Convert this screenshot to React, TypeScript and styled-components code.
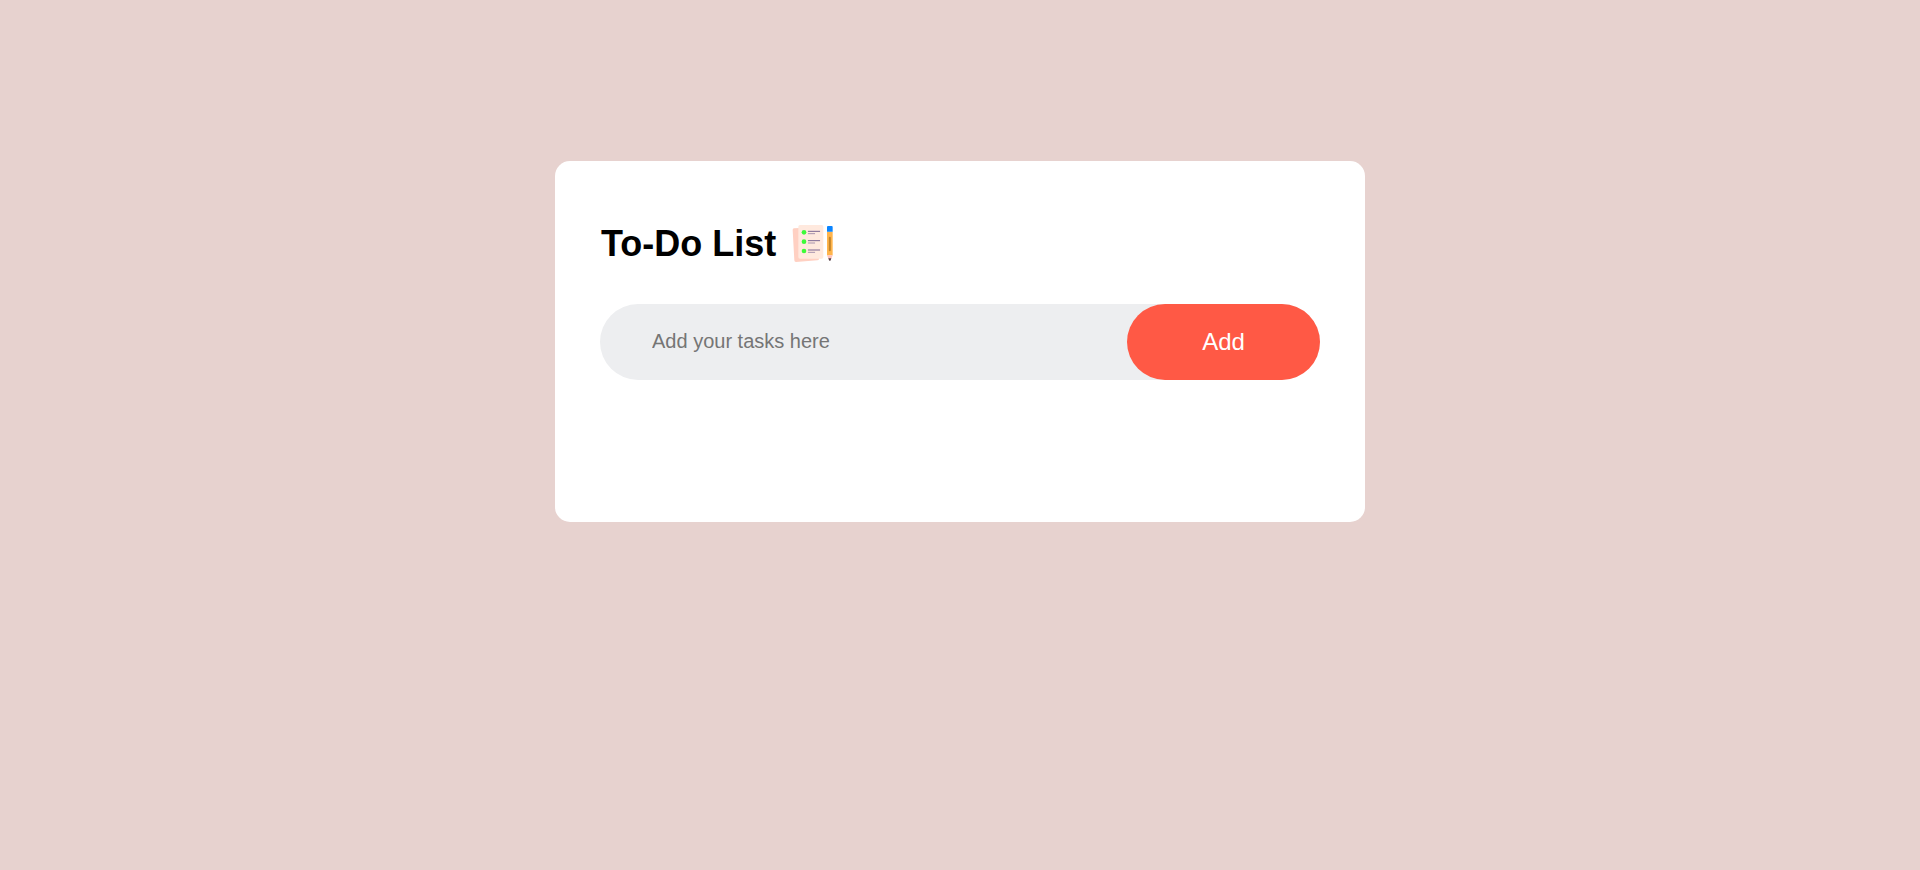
import React, { useState } from 'react';
import styled, { createGlobalStyle } from 'styled-components';

const GlobalStyle = createGlobalStyle`
  *, *::before, *::after { box-sizing: border-box; }
  body {
    margin: 0;
    background: #e7d2cf;
    font-family: "Liberation Sans", Arial, sans-serif;
  }
`;

const Page = styled.main`
  min-height: 100vh;
  padding: 161px 16px 40px;
`;

const Card = styled.section`
  max-width: 810px;
  margin: 0 auto;
  padding: 60px 45px 102px;
  border-radius: 15px;
  background: #fff;
`;

const Header = styled.header`
  display: flex;
  align-items: center;
  gap: 15px;
  margin-bottom: 38px;
  padding-left: 1px;
`;

const Title = styled.h1`
  margin: 0;
  color: #000;
  font-size: 36px;
  font-weight: 700;
  line-height: 45px;
`;

const Icon = styled.svg`
  width: 45px;
  height: 45px;
  flex: none;
`;

const Form = styled.form`
  display: flex;
  height: 76px;
  border-radius: 38px;
  background: #edeef0;
  margin-bottom: 40px;
`;

const TaskInput = styled.input`
  flex: 1;
  min-width: 0;
  padding: 0 16px 2px 52px;
  border: none;
  outline: none;
  background: transparent;
  font-family: inherit;
  font-size: 20px;
  &::placeholder { color: #757575; opacity: 1; }
`;

const AddButton = styled.button`
  width: 193px;
  border: none;
  border-radius: 38px;
  background: #ff5945;
  color: #fff;
  font-family: inherit;
  font-size: 24px;
  cursor: pointer;
`;

const Tasks = styled.ul`
  margin: 0;
  padding: 0 15px;
  list-style: none;
`;

const Task = styled.li`
  padding: 12px 0;
  font-size: 20px;
`;

const ChecklistIcon = () => (
  <Icon viewBox="33 33 135 135" aria-hidden="true">
    <path d="M42 55 L112 52 L117 146 Q117 151 112 151 L48 156 Q43 156 43 151 L38 60 Q38 56 42 55Z" fill="#ffd0c2" />
    <rect x="55" y="45" width="75" height="101" rx="5" fill="#ffe9de" />
    {[67, 95, 123].map((y) => (
      <g key={y}>
        <circle cx="72" cy={y} r="7" fill="#3dfb38" />
        <path d={`M85 ${y - 3}H119`} stroke="#7c6792" strokeWidth="3" strokeLinecap="round" />
        <path d={`M85 ${y + 4}H104`} stroke="#a995ae" strokeWidth="3" strokeLinecap="round" />
      </g>
    ))}
    <path d="M141 65H158V136H141Z" fill="#ffb44b" />
    <path d="M141 65V51Q141 48 144 48H155Q158 48 158 51V65Z" fill="#0a84ff" />
    <path d="M149.500 83V121" stroke="#c18429" strokeWidth="6" strokeLinecap="round" />
    <path d="M141 136H158L154 146H145Z" fill="#ffc3bb" />
    <path d="M145 145H154L152 151Q149.500 154 147 151Z" fill="#543d45" />
  </Icon>
);

export default function App() {
  const [text, setText] = useState('');
  const [tasks, setTasks] = useState<string[]>([]);

  const addTask = (event: React.FormEvent) => {
    event.preventDefault();
    const value = text.trim();
    if (!value) return;
    setTasks([...tasks, value]);
    setText('');
  };

  return (
    <>
      <GlobalStyle />
      <Page>
        <Card>
          <Header>
            <Title>To-Do List</Title>
            <ChecklistIcon />
          </Header>
          <Form onSubmit={addTask}>
            <TaskInput
              type="text"
              aria-label="Add your tasks here"
              placeholder="Add your tasks here"
              value={text}
              onChange={(event) => setText(event.target.value)}
            />
            <AddButton type="submit">Add</AddButton>
          </Form>
          <Tasks>
            {tasks.map((task, index) => (
              <Task key={index}>{task}</Task>
            ))}
          </Tasks>
        </Card>
      </Page>
    </>
  );
}
